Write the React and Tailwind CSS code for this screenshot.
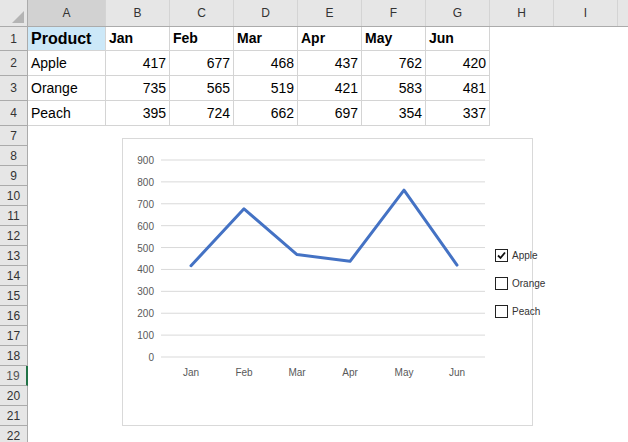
import React from "react";

const cols = [
  { l: "A", w: 78 }, { l: "B", w: 64 }, { l: "C", w: 64 }, { l: "D", w: 64 },
  { l: "E", w: 64 }, { l: "F", w: 64 }, { l: "G", w: 64 }, { l: "H", w: 64 }, { l: "I", w: 64 },
];
const data = [
  ["Product", "Jan", "Feb", "Mar", "Apr", "May", "Jun"],
  ["Apple", 417, 677, 468, 437, 762, 420],
  ["Orange", 735, 565, 519, 421, 583, 481],
  ["Peach", 395, 724, 662, 697, 354, 337],
];
const font = { fontFamily: "Arial, 'Liberation Sans', sans-serif" };

function Chart() {
  const ys = (v) => 218 - (v / 900) * 197;
  const xs = [68, 121, 174, 227, 281, 334];
  const apple = [417, 677, 468, 437, 762, 420];
  const months = ["Jan", "Feb", "Mar", "Apr", "May", "Jun"];
  return (
    <div className="absolute left-[122px] top-[138px] w-[411px] h-[288px] bg-white border border-[#d9d9d9]" style={{ fontFamily: "'Liberation Sans', sans-serif" }}>
      <svg width="411" height="288" className="absolute left-0 top-0">
        {[0, 100, 200, 300, 400, 500, 600, 700, 800, 900].map((v) => (
          <g key={v}>
            <line x1="38" x2="362" y1={ys(v)} y2={ys(v)} stroke="#d9d9d9" strokeWidth="1" />
            <text x="31" y={ys(v) + 4} textAnchor="end" fontSize="10" fill="#595959">{v}</text>
          </g>
        ))}
        {months.map((m, i) => (
          <text key={m} x={xs[i]} y="237" textAnchor="middle" fontSize="10" fill="#595959">{m}</text>
        ))}
        <polyline points={apple.map((v, i) => `${xs[i]},${ys(v)}`).join(" ")} fill="none" stroke="#4472c4" strokeWidth="3" strokeLinejoin="round" strokeLinecap="round" />
      </svg>
      <div className="absolute left-[372px] top-[110px] flex flex-col gap-[15px] text-[10px] text-[#333]">
        {["Apple", "Orange", "Peach"].map((n, i) => (
          <div key={n} className="flex items-center gap-[4px] h-[13px]">
            <div className="w-[13px] h-[13px] border border-[#222] bg-white flex items-center justify-center">
              {i === 0 && (
                <svg width="11" height="11" viewBox="0 0 11 11"><path d="M2 5.5 L4.5 8 L9 2.5" fill="none" stroke="#111" strokeWidth="1.8" /></svg>
              )}
            </div>
            <span>{n}</span>
          </div>
        ))}
      </div>
    </div>
  );
}

export default function App() {
  const rows = [];
  data.forEach((r, ri) => rows.push({ n: ri + 1, h: ri === 0 ? 24 : 25, cells: r }));
  for (let n = 7; n <= 22; n++) rows.push({ n, h: 20, cells: [] });
  return (
    <div className="relative w-[628px] h-[442px] overflow-hidden bg-white text-black" style={font}>
      <div className="flex h-[27px] bg-[#e6e6e6] border-b border-[#ababab]">
        <div className="w-[28px] shrink-0 border-r border-[#ababab] relative">
          <svg width="12" height="12" className="absolute right-[3px] bottom-[3px]"><path d="M12 0 L12 12 L0 12 Z" fill="#b4b4b4" /></svg>
        </div>
        {cols.map((c, i) => (
          <div key={c.l} style={{ width: c.w }} className={`shrink-0 flex items-center justify-center text-[12px] text-[#333] border-r border-[#d4d4d4] ${i === 0 ? "bg-[#d2d2d2]" : ""}`}>{c.l}</div>
        ))}
      </div>
      {rows.map((r) => (
        <div key={r.n} className="flex" style={{ height: r.h }}>
          <div className={`w-[28px] shrink-0 bg-[#e6e6e6] border-r border-b border-[#ababab] flex items-center justify-center text-[12px] ${r.n === 19 ? "bg-[#d2d2d2] text-[#555] border-r-2 border-r-[#217346]" : r.n >= 8 && r.n <= 18 ? "text-[#333]" : "text-[#333]"}`}>{r.n}</div>
          {cols.map((c, ci) => {
            const v = r.cells[ci];
            const inTable = r.n <= 4 && ci <= 6;
            const header = r.n === 1;
            return (
              <div key={c.l} style={{ width: c.w }} className={`shrink-0 flex items-center px-[3px] text-[14px] ${inTable ? "border-r border-b border-[#d4d4d4]" : ""} ${r.n === 1 && ci === 0 ? "bg-[#cce8f8] text-[16px]" : ""} ${header ? "font-bold" : ""} ${typeof v === "number" ? "justify-end" : ""}`}>
                {v}
              </div>
            );
          })}
        </div>
      ))}
      <Chart />
    </div>
  );
}
